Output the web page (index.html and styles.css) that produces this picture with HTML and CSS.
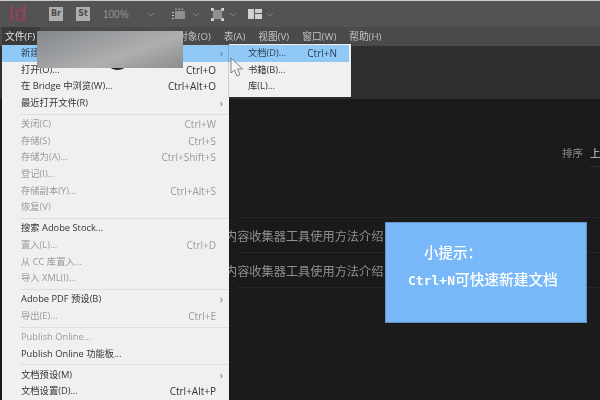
FILE: index.html
```html
<!DOCTYPE html>
<html lang="zh-CN">
<head>
<meta charset="utf-8">
<title>InDesign</title>
<link rel="stylesheet" href="styles.css">
</head>
<body>
<div class="app">
  <header class="toolbar">
    <span class="logo">Id</span>
    <span class="badge">Br</span>
    <span class="badge">St</span>
    <span class="zoom">100%</span>
    <svg class="caret caret-zoom" viewBox="0 0 8 5"><path d="M1 1l3 3 3-3"/></svg>
    <svg class="tool" viewBox="0 0 16 14"><path class="fill" d="M4 4h10v8H4z"/><path class="dash" d="M1 5.500h2M1 8.500h2M1 11.500h2M5 1.500v1.500M8 1.500v1.500M11 1.500v1.500"/></svg>
    <svg class="caret" viewBox="0 0 8 5"><path d="M1 1l3 3 3-3"/></svg>
    <svg class="tool tool-b" viewBox="0 0 14 14"><path class="fill" d="M2 2h10v10H2z"/><path class="corner" d="M0 0h3v3H0zM11 0h3v3h-3zM0 11h3v3H0zM11 11h3v3h-3z"/></svg>
    <svg class="caret" viewBox="0 0 8 5"><path d="M1 1l3 3 3-3"/></svg>
    <svg class="tool tool-c" viewBox="0 0 14 10"><path class="bright" d="M0 0h6v10H0zM7 0h7v4H7zM7 5h7v5H7z"/></svg>
    <svg class="caret" viewBox="0 0 8 5"><path d="M1 1l3 3 3-3"/></svg>
  </header>
  <nav class="menubar">
    <span class="menu-item is-open">文件(F)</span>
    <span class="menu-item">编辑(E)</span>
    <span class="menu-item">版面(L)</span>
    <span class="menu-item">文字(T)</span>
    <span class="menu-item">对象(O)</span>
    <span class="menu-item">表(A)</span>
    <span class="menu-item">视图(V)</span>
    <span class="menu-item">窗口(W)</span>
    <span class="menu-item">帮助(H)</span>
  </nav>
  <div class="panel-head"></div>
  <main class="home">
    <div class="sort">排序<span class="sort-value">上</span></div>
    <div class="files">
      <div class="file-row">内容收集器工具使用方法介绍</div>
      <div class="file-row">内容收集器工具使用方法介绍</div>
    </div>
  </main>
</div>

<div class="file-menu">
  <div class="row active"><span>新建(N)</span><span></span><i class="arrow">›</i></div>
  <div class="row"><span>打开(O)...</span><span>Ctrl+O</span></div>
  <div class="row"><span>在 Bridge 中浏览(W)...</span><span>Ctrl+Alt+O</span></div>
  <div class="row"><span>最近打开文件(R)</span><span></span><i class="arrow">›</i></div>
  <hr>
  <div class="row off"><span>关闭(C)</span><span>Ctrl+W</span></div>
  <div class="row off"><span>存储(S)</span><span>Ctrl+S</span></div>
  <div class="row off"><span>存储为(A)...</span><span>Ctrl+Shift+S</span></div>
  <div class="row off"><span>登记(I)...</span></div>
  <div class="row off"><span>存储副本(Y)...</span><span>Ctrl+Alt+S</span></div>
  <div class="row off"><span>恢复(V)</span></div>
  <hr>
  <div class="row"><span>搜索 Adobe Stock...</span></div>
  <div class="row off"><span>置入(L)...</span><span>Ctrl+D</span></div>
  <div class="row off"><span>从 CC 库置入...</span></div>
  <div class="row off"><span>导入 XML(I)...</span></div>
  <hr>
  <div class="row"><span>Adobe PDF 预设(B)</span><span></span><i class="arrow">›</i></div>
  <div class="row off"><span>导出(E)...</span><span>Ctrl+E</span></div>
  <hr>
  <div class="row off"><span>Publish Online...</span></div>
  <div class="row"><span>Publish Online 功能板...</span></div>
  <hr>
  <div class="row"><span>文档预设(M)</span><span></span><i class="arrow">›</i></div>
  <div class="row"><span>文档设置(D)...</span><span>Ctrl+Alt+P</span></div>
</div>

<div class="sub-menu">
  <div class="sub-row active"><span>文档(D)...</span><span class="keys">Ctrl+N</span></div>
  <div class="sub-row"><span>书籍(B)...</span></div>
  <div class="sub-row"><span>库(L)...</span></div>
</div>

<div class="blob"></div>
<div class="smudge"></div>

<svg class="cursor" viewBox="0 0 14 22"><path d="M1 1v15l3.500-3 2.500 6 3-1.300-2.500-5.700h5z"/></svg>

<aside class="tip">
  <p class="tip-title">小提示：</p>
  <p class="tip-body">Ctrl+N<span class="tip-cjk">可快速新建文档</span></p>
</aside>
</body>
</html>
```
FILE: styles.css
```css
* { box-sizing: border-box; }
html, body { margin: 0; height: 100%; }
body {
  width: 600px;
  height: 400px;
  overflow: hidden;
  position: relative;
  background: #1a1a1a;
  font-family: "Open Sans", "Noto Sans CJK SC", sans-serif;
  font-size: 9.300px;
}
.app {
  height: 400px;
  display: flex;
  flex-direction: column;
  border-top: 1px solid #c9c9c9;
  filter: blur(0.35px);
}
.toolbar {
  height: 26px;
  background: #535353;
  display: flex;
  align-items: center;
  padding-left: 8px;
}
.logo {
  font-family: "Liberation Sans", sans-serif;
  font-size: 22px;
  color: #96405f;
  width: 41px;
}
.badge {
  width: 14px;
  height: 14px;
  margin-right: 13px;
  background: #aeaeae;
  color: #4c4c4c;
  font: 700 8px/14px "DejaVu Sans", sans-serif;
  text-align: center;
}
.zoom {
  font-family: "Liberation Sans", sans-serif;
  font-size: 10px;
  color: #969696;
  width: 44px;
}
.caret { width: 8px; height: 5px; fill: none; stroke: #7f7f7f; stroke-width: 1; }
.caret-zoom { margin-right: 16px; }
.tool { width: 16px; height: 14px; margin-right: 5px; }
.tool-b { width: 13px; height: 13px; margin-left: 11px; margin-right: 5px; }
.tool-c { width: 14px; height: 10px; margin-left: 11px; margin-right: 4px; }
.fill { fill: #8f8f8f; }
.dash { stroke: #c4c4c4; fill: none; }
.corner { fill: #d6d6d6; }
.bright { fill: #d0d0d0; }
.menubar {
  height: 19px;
  background: #4a4a4a;
  display: flex;
  align-items: center;
  padding-left: 2px;
  color: #c4c4c4;
  font-size: 9.700px;
}
.menu-item { margin-right: 13px; line-height: 19px; white-space: nowrap; }
.is-open { background: #3a3a3a; color: #e4e4e4; padding: 0 5px 0 3px; margin-right: 8px; }
.panel-head { height: 53px; background: #2f2f2f; }
.home { flex: 1; background: #1a1a1a; display: flex; flex-direction: column; align-items: flex-end; }
.sort {
  margin-top: 45px;
  height: 23px;
  width: 38px;
  display: flex;
  gap: 7px;
  line-height: 18px;
  color: #8e8e8e;
  white-space: nowrap;
  font-size: 10.500px;
}
.sort-value { color: #d0d0d0; flex: 1; border-bottom: 1px solid #2c2c2c; }
.files { margin-top: 50px; width: 363px; }
.file-row {
  height: 35px;
  line-height: 37px;
  border-top: 1px solid #262626;
  color: #909090;
  font-size: 12.200px;
  text-indent: -12px;
  white-space: nowrap;
}
.file-row:last-child { border-bottom: 1px solid #262626; height: 36px; }
.file-menu {
  position: absolute;
  left: 2px;
  top: 45px;
  width: 227px;
  height: 355px;
  background: #f0f0f0;
  color: #333;
  filter: blur(0.3px);
}
.row {
  display: grid;
  grid-template-columns: 1fr auto 13px;
  height: 16.670px;
  line-height: 16.670px;
  padding-left: 19px;
  white-space: nowrap;
}
.row > span:nth-child(2) { grid-column: 2; font-size: 10px; }
.arrow { font-style: normal; font-size: 11px; text-align: right; padding-right: 6px; grid-column: 3; color: #777; }
.active { background: #90c8f6; color: #2b3f55; }
.off { color: #9a9a9a; }
.file-menu hr { border: 0; border-top: 1px solid #dedede; margin: 2px 0 1.350px 18px; height: 1px; }
.sub-menu {
  position: absolute;
  left: 229px;
  top: 44px;
  width: 122px;
  height: 53px;
  padding: 1px 2px 0 0;
  background: #f0f0f0;
  color: #333;
  box-shadow: 0 0 1px #222;
  filter: blur(0.3px);
}
.sub-row {
  display: flex;
  justify-content: space-between;
  height: 16.670px;
  line-height: 16.670px;
  padding: 0 12px 0 19px;
}
.keys { font-size: 10px; }
.blob {
  position: absolute;
  left: 109px;
  top: 60px;
  width: 17px;
  height: 10px;
  border-radius: 50%;
  background: #222;
}
.smudge {
  position: absolute;
  left: 37px;
  top: 31px;
  width: 146px;
  height: 37px;
  background: linear-gradient(160deg, #84878a 0%, #a2a4a6 45%, #adafb0 62%, #8b8d8d 100%);
  filter: blur(0.4px);
}
.cursor {
  position: absolute;
  left: 230px;
  top: 57px;
  width: 14px;
  height: 22px;
  fill: #f4f4f4;
  stroke: #666;
  stroke-width: 0.8;
}
.tip {
  position: absolute;
  left: 385px;
  top: 222px;
  width: 202px;
  height: 101px;
  background: #78b8f8;
  border: 1px solid #5f93c8;
  color: #fff;
  font-family: "DejaVu Sans Mono", "Noto Sans CJK SC", monospace;
  font-weight: 700;
  filter: blur(0.3px);
}
.tip p { margin: 0; white-space: nowrap; }
.tip-title { font-size: 14.500px; font-weight: 500; padding: 21px 0 0 38px; line-height: 18px; }
.tip-body { font-size: 13px; padding: 8px 0 0 22px; line-height: 20px; }
.tip-cjk { font-size: 14.700px; font-weight: 500; }
```
